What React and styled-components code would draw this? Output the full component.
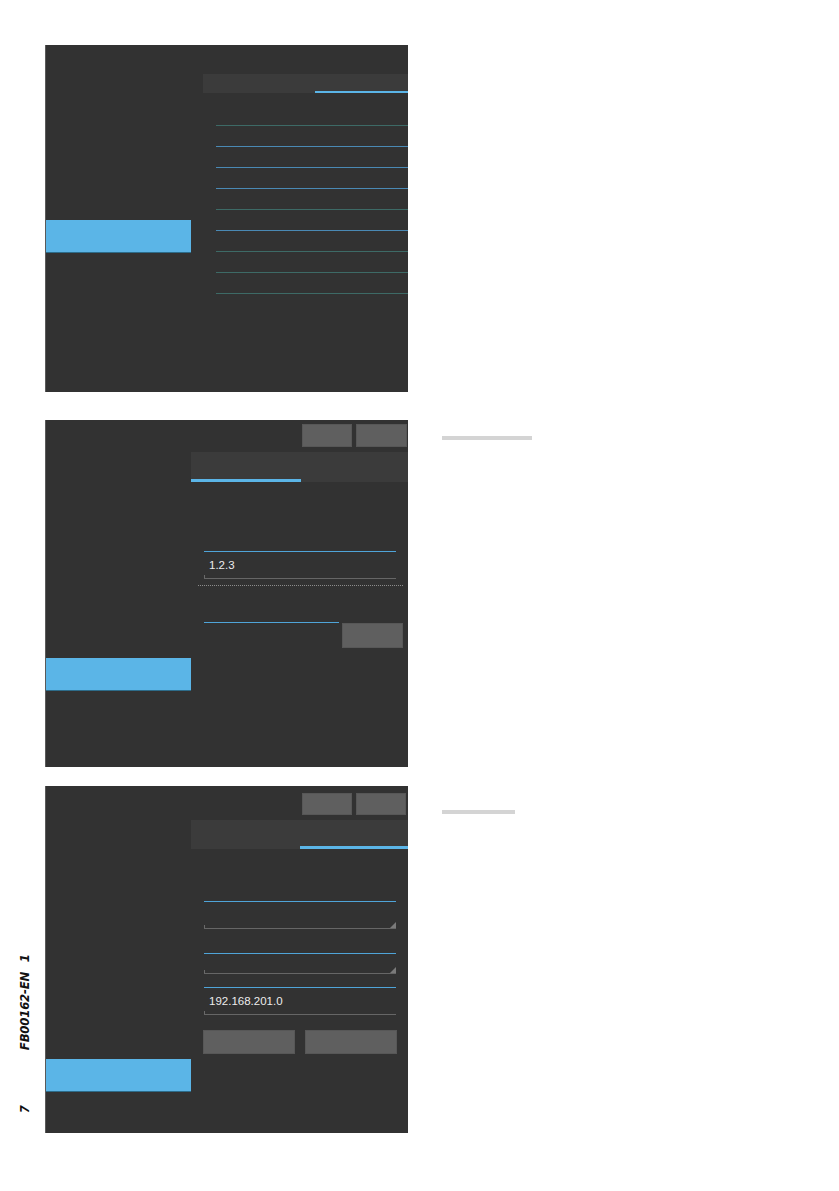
import React from "react";
import styled, { createGlobalStyle } from "styled-components";

const GlobalStyle = createGlobalStyle`
  html, body {
    margin: 0;
    padding: 0;
    background: #ffffff;
    font-family: "Liberation Sans", Arial, sans-serif;
  }
`;

const Page = styled.div`
  width: 839px;
  min-height: 1191px;
  padding-top: 45px;
  box-sizing: border-box;
  background: #ffffff;
`;

const Section = styled.section`
  display: grid;
  grid-template-columns: 45px 363px 1fr;
  margin-top: ${(p) => p.$top || 0}px;
`;

const Margin = styled.div`
  display: flex;
  flex-direction: column;
  justify-content: flex-end;
  align-items: center;
  padding-bottom: 20px;
`;

const FooterMark = styled.div`
  writing-mode: vertical-rl;
  transform: rotate(180deg);
  display: flex;
  align-items: center;
  font-family: "DejaVu Sans Condensed", "Liberation Sans", sans-serif;
  font-style: italic;
  font-weight: bold;
  font-size: 13px;
  letter-spacing: -0.2px;
  color: #111;
  line-height: 1;
  margin-left: 4px;
`;

const PageNo = styled.span`
  margin-bottom: ${(p) => p.$gap || 0}px;
`;

const Notes = styled.div`
  padding-left: 34px;
  padding-top: ${(p) => p.$top || 0}px;
`;

const NoteBar = styled.div`
  width: ${(p) => p.$width}px;
  height: 4px;
  background: #d4d4d4;
`;

const Panel = styled.div`
  display: grid;
  grid-template-columns: 146px 1fr;
  height: 347px;
  background: #323232;
`;

const Sidebar = styled.div`
  border-left: 1px solid #5a5a5a;
  padding-top: ${(p) => p.$activeTop}px;
`;

const ActiveItem = styled.div`
  height: 32px;
  background: #5bb5e7;
  border-bottom: 1px solid #2d6c8a;
`;

const Content = styled.div`
  display: flex;
  flex-direction: column;
  padding-top: ${(p) => p.$top || 0}px;
  padding-left: ${(p) => p.$left || 0}px;
`;

const ButtonBar = styled.div`
  display: flex;
  justify-content: flex-end;
  gap: 4px;
  padding-right: ${(p) => p.$right || 0}px;
  margin-bottom: 5px;
`;

const GreyButton = styled.div`
  width: ${(p) => p.$width}px;
  height: ${(p) => p.$height}px;
  background: #5f5f5f;
  box-shadow: inset 0 0 0 1px #575757;
`;

const TabBar = styled.div`
  display: flex;
  height: ${(p) => p.$height}px;
  background: #3b3b3b;
`;

const Tab = styled.div`
  width: ${(p) => (p.$width ? `${p.$width}px` : "auto")};
  flex: ${(p) => (p.$width ? "none" : "1")};
  box-shadow: ${(p) =>
    p.$active ? `inset 0 -${p.$line}px 0 #5bb5e7` : "none"};
`;

const LineList = styled.div`
  margin-top: 12px;
  margin-left: 13px;
  display: flex;
  flex-direction: column;
`;

const LineRow = styled.div`
  height: 20px;
  border-bottom: 1px solid ${(p) => p.$color};
`;

const Field = styled.div`
  position: relative;
  width: 192px;
  height: ${(p) => p.$height}px;
  margin-left: 13px;
  margin-top: ${(p) => p.$top || 0}px;
  border-top: 1px solid #4fa4d8;
  border-bottom: 1px solid #666666;
  box-sizing: border-box;
  display: flex;
  align-items: center;
  padding-left: 5px;
  font-size: 11.5px;
  color: #ececec;

  &::before {
    content: "";
    position: absolute;
    left: 0;
    bottom: 0;
    width: 1px;
    height: 3px;
    background: #6a6a6a;
  }

  ${(p) =>
    p.$grip &&
    `
    &::after {
      content: "";
      position: absolute;
      right: 0;
      bottom: 0;
      width: 0;
      height: 0;
      border-left: 6px solid transparent;
      border-bottom: 6px solid #7a7a7a;
    }
  `}
`;

const Dotted = styled.div`
  margin: 6px 0 0 7px;
  width: 205px;
  border-top: 1px dotted #8c8c8c;
`;

const ActionRow = styled.div`
  display: flex;
  align-items: flex-start;
  gap: ${(p) => p.$gap || 0}px;
  margin-top: ${(p) => p.$top || 0}px;
  margin-left: ${(p) => p.$left || 0}px;
`;

const BlueLine = styled.div`
  width: 135px;
  border-top: 1px solid #4fa4d8;
  margin-top: -1px;
`;

const lineColors = [
  "#3d6a66",
  "#4a89b4",
  "#4a89b4",
  "#4a89b4",
  "#3d6a66",
  "#4a89b4",
  "#3d6a66",
  "#3d6a66",
  "#3d6a66",
];

export default function App() {
  return (
    <>
      <GlobalStyle />
      <Page>
        <Section>
          <Margin />
          <Panel>
            <Sidebar $activeTop={175}>
              <ActiveItem />
            </Sidebar>
            <Content $top={29} $left={12}>
              <TabBar $height={19}>
                <Tab $width={112} />
                <Tab $active $line={2} />
              </TabBar>
              <LineList>
                {lineColors.map((c, i) => (
                  <LineRow key={i} $color={c} />
                ))}
              </LineList>
            </Content>
          </Panel>
          <Notes />
        </Section>

        <Section $top={28}>
          <Margin />
          <Panel>
            <Sidebar $activeTop={238}>
              <ActiveItem />
            </Sidebar>
            <Content $top={4}>
              <ButtonBar $right={1}>
                <GreyButton $width={50} $height={23} />
                <GreyButton $width={51} $height={23} />
              </ButtonBar>
              <TabBar $height={30}>
                <Tab $width={110} $active $line={3} />
                <Tab />
              </TabBar>
              <Field $height={28} $top={69}>
                1.2.3
              </Field>
              <Dotted />
              <ActionRow $top={37} $left={13} $gap={3}>
                <BlueLine />
                <GreyButton $width={61} $height={25} />
              </ActionRow>
            </Content>
          </Panel>
          <Notes $top={16}>
            <NoteBar $width={90} />
          </Notes>
        </Section>

        <Section $top={19}>
          <Margin>
            <FooterMark>
              <PageNo $gap={55}>7</PageNo>
              <PageNo $gap={10}>FB00162-EN</PageNo>
              <span>1</span>
            </FooterMark>
          </Margin>
          <Panel>
            <Sidebar $activeTop={273}>
              <ActiveItem />
            </Sidebar>
            <Content $top={7}>
              <ButtonBar $right={2}>
                <GreyButton $width={50} $height={22} />
                <GreyButton $width={50} $height={22} />
              </ButtonBar>
              <TabBar $height={29}>
                <Tab $width={109} />
                <Tab $active $line={3} />
              </TabBar>
              <Field $height={28} $top={52} $grip />
              <Field $height={21} $top={24} $grip />
              <Field $height={28} $top={13}>
                192.168.201.0
              </Field>
              <ActionRow $top={15} $left={12} $gap={10}>
                <GreyButton $width={92} $height={24} />
                <GreyButton $width={92} $height={24} />
              </ActionRow>
            </Content>
          </Panel>
          <Notes $top={24}>
            <NoteBar $width={73} />
          </Notes>
        </Section>
      </Page>
    </>
  );
}
